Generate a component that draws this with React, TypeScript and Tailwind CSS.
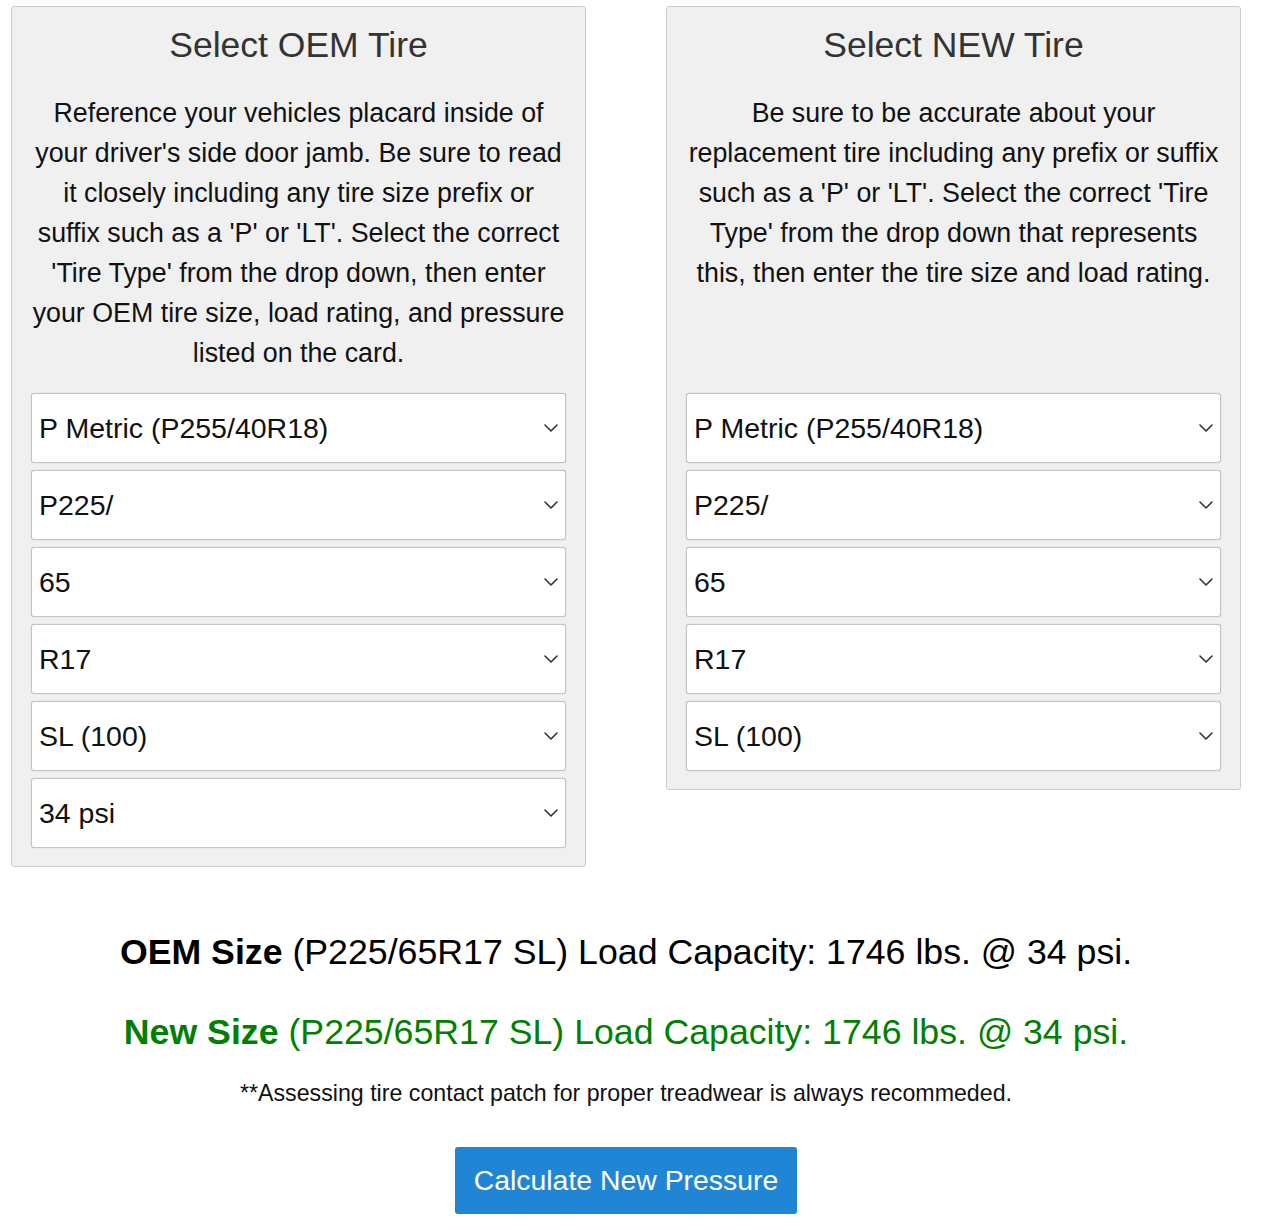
import React from "react";

const font = { fontFamily: '"Liberation Sans", Arial, Helvetica, sans-serif' };

function Chevron() {
  return (
    <svg width="14" height="8" viewBox="0 0 14 8" fill="none" className="pointer-events-none absolute right-[8px] top-1/2 -translate-y-1/2">
      <path d="M1 1 L7 7 L13 1" stroke="#333" strokeWidth="1.6" strokeLinecap="round" strokeLinejoin="round" />
    </svg>
  );
}

function Select({ value }: { value: string }) {
  return (
    <div className="relative h-[70px] w-full">
      <select
        defaultValue={value}
        className="h-full w-full appearance-none rounded-[3px] border border-[#c4c4c4] bg-white pl-[7px] pr-[30px] text-[28.5px] text-[#111] shadow-[0_0_1px_rgba(0,0,0,0.25)] outline-none"
        style={font}
      >
        <option value={value}>{value}</option>
      </select>
      <Chevron />
    </div>
  );
}

function Panel({ title, lines, selects }: { title: string; lines: string[]; selects: string[] }) {
  return (
    <div className="w-[575px] rounded-[3px] border border-[#cccccc] bg-[#f0f0f0] px-[19px] pb-[18px] pt-[18px]">
      <h3 className="text-center text-[35.5px] leading-[40px] text-[#333]">{title}</h3>
      <div className="mt-[28px] min-h-[280px] text-center text-[26.8px] leading-[40px] text-[#111]">
        {lines.map((l) => (
          <span key={l} className="block whitespace-nowrap">
            {l}
          </span>
        ))}
      </div>
      <div className="mt-[20px] flex flex-col gap-[7px]">
        {selects.map((s, i) => (
          <Select key={i} value={s} />
        ))}
      </div>
    </div>
  );
}

export default function App() {
  return (
    <div className="min-h-[1230px] w-[1252px] bg-white" style={font}>
      <div className="flex items-start gap-[80px] px-[11px] pt-[6px]">
        <Panel
          title="Select OEM Tire"
          lines={[
            "Reference your vehicles placard inside of",
            "your driver's side door jamb. Be sure to read",
            "it closely including any tire size prefix or",
            "suffix such as a 'P' or 'LT'. Select the correct",
            "'Tire Type' from the drop down, then enter",
            "your OEM tire size, load rating, and pressure",
            "listed on the card.",
          ]}
          selects={["P Metric (P255/40R18)", "P225/", "65", "R17", "SL (100)", "34 psi"]}
        />
        <Panel
          title="Select NEW Tire"
          lines={[
            "Be sure to be accurate about your",
            "replacement tire including any prefix or suffix",
            "such as a 'P' or 'LT'. Select the correct 'Tire",
            "Type' from the drop down that represents",
            "this, then enter the tire size and load rating.",
          ]}
          selects={["P Metric (P255/40R18)", "P225/", "65", "R17", "SL (100)"]}
        />
      </div>
      <div className="mt-[60px] flex flex-col items-center">
        <p className="text-center text-[35.7px] leading-[50px] text-black">
          <b>OEM Size</b> (P225/65R17 SL) Load Capacity: 1746 lbs. @ 34 psi.
        </p>
        <p className="mt-[30px] text-center text-[35.7px] leading-[50px] text-[#008000]">
          <b>New Size</b> (P225/65R17 SL) Load Capacity: 1746 lbs. @ 34 psi.
        </p>
        <p className="mt-[21px] text-center text-[23.2px] leading-[30px] text-[#111]">
          **Assessing tire contact patch for proper treadwear is always recommeded.
        </p>
        <button
          className="mt-[39px] flex h-[67px] w-[342px] items-center justify-center rounded-[3px] bg-[#2185d5] text-[28.4px] text-white"
          style={font}
        >
          Calculate New Pressure
        </button>
      </div>
    </div>
  );
}
